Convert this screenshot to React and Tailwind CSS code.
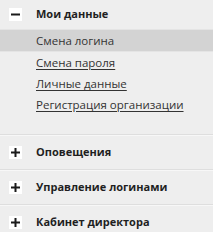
import { useState } from 'react';

const sections = [
  {
    title: 'Мои данные',
    open: true,
    items: ['Смена логина', 'Смена пароля', 'Личные данные', 'Регистрация организации'],
  },
  { title: 'Оповещения', open: false, items: [] },
  { title: 'Управление логинами', open: false, items: [] },
  { title: 'Кабинет директора', open: false, items: [] },
];

function Toggle({ open }) {
  return (
    <span className="w-[13px] h-[13px] bg-white flex items-center justify-center shrink-0">
      <svg width="9" height="9" viewBox="0 0 9 9">
        <rect x="0" y="3.5" width="9" height="2" fill="#1a1a1a" />
        {!open && <rect x="3.5" y="0" width="2" height="9" fill="#1a1a1a" />}
      </svg>
    </span>
  );
}

export default function App() {
  const [active] = useState('Смена логина');

  return (
    <div
      className="w-[213px] h-[232px] bg-[#eeeeee] overflow-hidden text-[#222]"
      style={{ fontFamily: '"Open Sans", "Liberation Sans", sans-serif' }}
    >
      {sections.map((s, i) => (
        <div key={s.title} className={i > 0 ? 'border-t border-[#dedede] shadow-[inset_0_1px_0_#f7f7f7]' : ''}>
          {/* Header */}
          <div className={`flex items-center gap-[14px] pl-[9px] ${i === 0 ? 'h-[29px]' : 'h-[34px]'}`}>
            <Toggle open={s.open} />
            <span className="text-[11px] font-bold text-[#1f1f1f]">{s.title}</span>
          </div>

          {/* Submenu */}
          {s.open && (
            <div className="pb-[19px]">
              {s.items.map((item) => (
                <div
                  key={item}
                  className={
                    item === active
                      ? 'h-[23px] flex items-center pl-[36px] bg-[#d3d3d3] border-t border-b border-[#e4e4e4] text-[11.5px] text-[#333]'
                      : 'h-[21px] flex items-center pl-[36px] text-[11.5px] text-[#333]'
                  }
                >
                  <span className={item === active ? '' : 'underline underline-offset-2'}>{item}</span>
                </div>
              ))}
            </div>
          )}
        </div>
      ))}
    </div>
  );
}
